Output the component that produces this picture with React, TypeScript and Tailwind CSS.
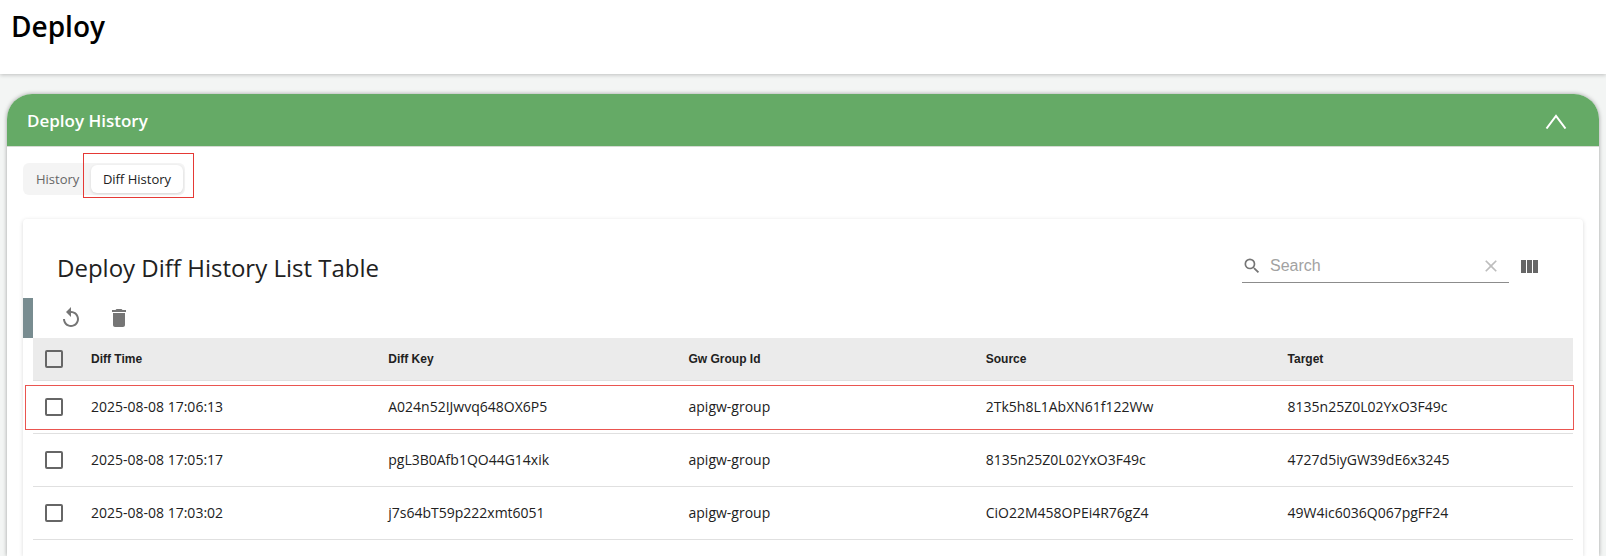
import { useState } from "react";
import { MdClear, MdDelete, MdReplay, MdSearch } from "react-icons/md";

const columns = ["Diff Time", "Diff Key", "Gw Group Id", "Source", "Target"];

const rows = [
  {
    time: "2025-08-08 17:06:13",
    key: "A024n52IJwvq648OX6P5",
    group: "apigw-group",
    source: "2Tk5h8L1AbXN61f122Ww",
    target: "8135n25Z0L02YxO3F49c",
  },
  {
    time: "2025-08-08 17:05:17",
    key: "pgL3B0Afb1QO44G14xik",
    group: "apigw-group",
    source: "8135n25Z0L02YxO3F49c",
    target: "4727d5iyGW39dE6x3245",
  },
  {
    time: "2025-08-08 17:03:02",
    key: "j7s64bT59p222xmt6051",
    group: "apigw-group",
    source: "CiO22M458OPEi4R76gZ4",
    target: "49W4ic6036Q067pgFF24",
  },
];

function Checkbox({
  label,
  checked,
  onChange,
}: {
  label: string;
  checked: boolean;
  onChange: () => void;
}) {
  return (
    <input
      type="checkbox"
      aria-label={label}
      checked={checked}
      onChange={onChange}
      className="block w-[18px] h-[18px] ml-3 appearance-none border-2 border-[#666] rounded-[2px] checked:bg-[#666] cursor-pointer"
    />
  );
}

export default function App() {
  const [tab, setTab] = useState("Diff History");
  const [search, setSearch] = useState("");
  const [selected, setSelected] = useState<string[]>([]);

  const toggle = (key: string) => {
    setSelected((prev) =>
      prev.includes(key) ? prev.filter((k) => k !== key) : [...prev, key]
    );
  };

  const toggleAll = () => {
    setSelected(selected.length === rows.length ? [] : rows.map((r) => r.key));
  };

  const tabStyle = (name: string) =>
    tab === name
      ? "bg-white shadow-[0_1px_3px_rgba(0,0,0,0.12)]"
      : "text-[#666]";

  return (
    <div className="min-h-screen flex flex-col bg-[#f3f5f4] text-[#212121] font-['Open_Sans','Noto_Sans',sans-serif]">
      <header className="h-[74px] px-[11px] pt-2 bg-white shadow-[0_1px_4px_rgba(0,0,0,0.22)]">
        <h1 className="text-[28px] leading-9 font-semibold text-black">
          Deploy
        </h1>
      </header>

      <section className="flex-1 flex flex-col mt-5 mx-[7px] bg-white rounded-t-[25px] shadow-[0_0_4px_rgba(0,0,0,0.35)]">
        <div className="flex items-center justify-between h-[53px] pl-5 pr-8 bg-[#65aa66] rounded-t-[25px] border-b border-[#d5dbd3] text-white">
          <h2 className="pt-px text-[17px] font-semibold">Deploy History</h2>
          <button
            type="button"
            aria-label="Collapse"
            className="pt-[2px] cursor-pointer"
          >
            <svg
              width="22"
              height="16"
              viewBox="0 0 22 16"
              fill="none"
              stroke="currentColor"
              strokeWidth="2"
            >
              <path d="M1.5 15.5L11 3l9.5 12.5" />
            </svg>
          </button>
        </div>

        <div className="flex-1 flex flex-col px-4 pt-4">
          {/* Tabs */}
          <div className="relative self-start flex items-center h-8 p-[2px] rounded-md bg-[#f4f4f4] text-[13px]">
            <button
              type="button"
              onClick={() => setTab("History")}
              className={`h-7 w-[66px] pt-px pl-[11px] text-left rounded-md cursor-pointer ${tabStyle("History")}`}
            >
              History
            </button>
            <button
              type="button"
              onClick={() => setTab("Diff History")}
              className={`h-7 w-[92px] pt-px rounded-md cursor-pointer ${tabStyle("Diff History")}`}
            >
              Diff History
            </button>
            <span className="absolute left-[60px] -right-[9px] -top-[10px] -bottom-[3px] border border-[#e53935] pointer-events-none" />
          </div>

          {/* Table card */}
          <div className="flex-1 mt-6 rounded-t bg-white shadow-[0_1px_4px_rgba(0,0,0,0.15)]">
            <div className="flex items-center justify-between h-[79px] pl-[34px] pr-[42px] pt-4">
              <h3 className="pt-[2px] text-2xl">Deploy Diff History List Table</h3>
              <div className="flex items-center gap-2">
                <label className="flex items-center w-[267px] h-8 pr-2 border-b border-[#8c8c8c] font-['Liberation_Sans',Arial,sans-serif]">
                  <MdSearch size={20} className="text-[#757575]" />
                  <input
                    type="text"
                    aria-label="Search"
                    placeholder="Search"
                    value={search}
                    onChange={(e) => setSearch(e.target.value)}
                    className="flex-1 min-w-0 px-2 text-base outline-none placeholder:text-[#a2a2a2]"
                  />
                  <button
                    type="button"
                    aria-label="Clear search"
                    onClick={() => setSearch("")}
                    className="text-[#bdbdbd] cursor-pointer"
                  >
                    <MdClear size={20} />
                  </button>
                </label>
                <button
                  type="button"
                  aria-label="Show columns"
                  className="text-[#666] cursor-pointer"
                >
                  <svg width="24" height="24" viewBox="0 0 24 24" fill="currentColor">
                    <path d="M10 18h5V5h-5v13zm-6 0h5V5H4v13zM16 5v13h5V5h-5z" />
                  </svg>
                </button>
              </div>
            </div>

            <div className="flex items-center gap-6 h-10 pl-[26px] border-l-[10px] border-[#788c90] text-[#757575]">
              <button type="button" aria-label="Refresh" className="cursor-pointer">
                <MdReplay size={24} />
              </button>
              <button type="button" aria-label="Delete" className="cursor-pointer">
                <MdDelete size={24} />
              </button>
            </div>

            <div className="mx-[10px]">
              <table className="w-full table-fixed border-separate border-spacing-0 text-left">
                <colgroup>
                  <col className="w-[42px]" />
                  <col className="w-[19.3%]" />
                  <col className="w-[19.5%]" />
                  <col className="w-[19.3%]" />
                  <col className="w-[19.6%]" />
                  <col />
                </colgroup>
                <thead>
                  <tr className="h-[43px] bg-[#ebebeb] text-xs font-['Liberation_Sans',Arial,sans-serif]">
                    <th className="p-0 border-b border-[#e0e0e0]">
                      <Checkbox
                        label="Select all"
                        checked={selected.length === rows.length}
                        onChange={toggleAll}
                      />
                    </th>
                    {columns.map((column) => (
                      <th
                        key={column}
                        className="py-0 px-4 font-bold border-b border-[#e0e0e0]"
                      >
                        {column}
                      </th>
                    ))}
                  </tr>
                </thead>
                <tbody>
                  {rows.map((row, index) => (
                    <tr key={row.key} className="relative h-[53px] text-sm">
                      <td className="p-0 border-b border-[#e0e0e0]">
                        <Checkbox
                          label={`Select ${row.key}`}
                          checked={selected.includes(row.key)}
                          onChange={() => toggle(row.key)}
                        />
                        {index === 0 && (
                          <span className="absolute -left-2 -right-px top-1 bottom-1 border border-[#ea5550] pointer-events-none" />
                        )}
                      </td>
                      <td className="py-0 px-4 border-b border-[#e0e0e0]">{row.time}</td>
                      <td className="py-0 px-4 border-b border-[#e0e0e0]">{row.key}</td>
                      <td className="py-0 px-4 border-b border-[#e0e0e0]">{row.group}</td>
                      <td className="py-0 px-4 border-b border-[#e0e0e0]">{row.source}</td>
                      <td className="py-0 px-4 border-b border-[#e0e0e0]">{row.target}</td>
                    </tr>
                  ))}
                </tbody>
              </table>
            </div>
          </div>
        </div>
      </section>
    </div>
  );
}
